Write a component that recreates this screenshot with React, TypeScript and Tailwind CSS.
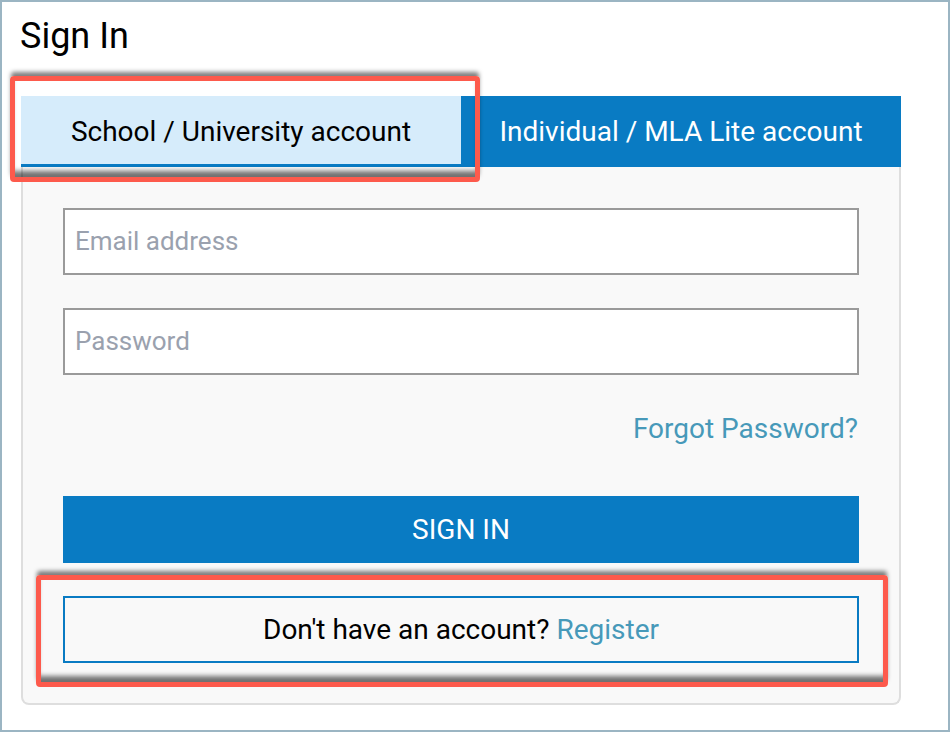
import React from "react";

export default function App() {
  return (
    <div className="w-[950px] h-[732px] border-2 border-[#9bb5c3] bg-white font-['Roboto','Liberation_Sans',sans-serif] text-black overflow-hidden">
      <div className="pt-[14px] pl-[18px] text-[36px] leading-[40px]">Sign In</div>
      <div className="mt-[40px] ml-[19px] w-[880px]">
        <div className="relative flex h-[71px]">
          <div className="w-[440px] h-full bg-[#d6ecfb] border-b-[3px] border-[#097bc3] flex items-center justify-center text-[28px] leading-[32px] pt-[3px]">
            School / University account
          </div>
          <div className="w-[440px] h-full bg-[#097bc3] flex items-center justify-center text-[28px] leading-[32px] text-white">
            Individual / MLA Lite account
          </div>
          <div className="absolute left-[-11px] top-[-20px] w-[470px] h-[106px] border-[5px] border-[#fd5a4c] rounded-[4px] shadow-[0_-5px_4px_-1px_rgba(0,0,0,0.5),inset_0_-9px_5px_-3px_rgba(0,0,0,0.55)] pointer-events-none" />
        </div>
        <div className="bg-[#f9f9f9] border-2 border-t-0 border-[#dedede] rounded-b-[8px] px-[40px] pt-[41px] pb-[40px]">
          <div className="h-[67px] border-2 border-[#9a9a9a] bg-white flex items-center px-[10px] text-[26px] text-[#9aa1ae]">
            Email address
          </div>
          <div className="mt-[33px] h-[67px] border-2 border-[#9a9a9a] bg-white flex items-center px-[10px] text-[26px] text-[#9aa1ae]">
            Password
          </div>
          <div className="mt-[38px] text-right text-[28px] leading-[32px] text-[#4799b9] pr-[1px]">
            Forgot Password?
          </div>
          <div className="mt-[51px] h-[67px] bg-[#097bc3] text-white flex items-center justify-center text-[28px] leading-[32px]">
            SIGN IN
          </div>
          <div className="relative mt-[33px] h-[67px] border-2 border-[#097bc3] flex items-center justify-center text-[28px] leading-[32px]">
            <span>
              Don't have an account? <span className="text-[#4799b9]">Register</span>
            </span>
            <div className="absolute left-[-29px] top-[-23px] w-[852px] h-[112px] border-[5px] border-[#fd5a4c] rounded-[4px] shadow-[0_-5px_4px_-1px_rgba(0,0,0,0.5),inset_0_-9px_5px_-3px_rgba(0,0,0,0.55)] pointer-events-none" />
          </div>
        </div>
      </div>
    </div>
  );
}
